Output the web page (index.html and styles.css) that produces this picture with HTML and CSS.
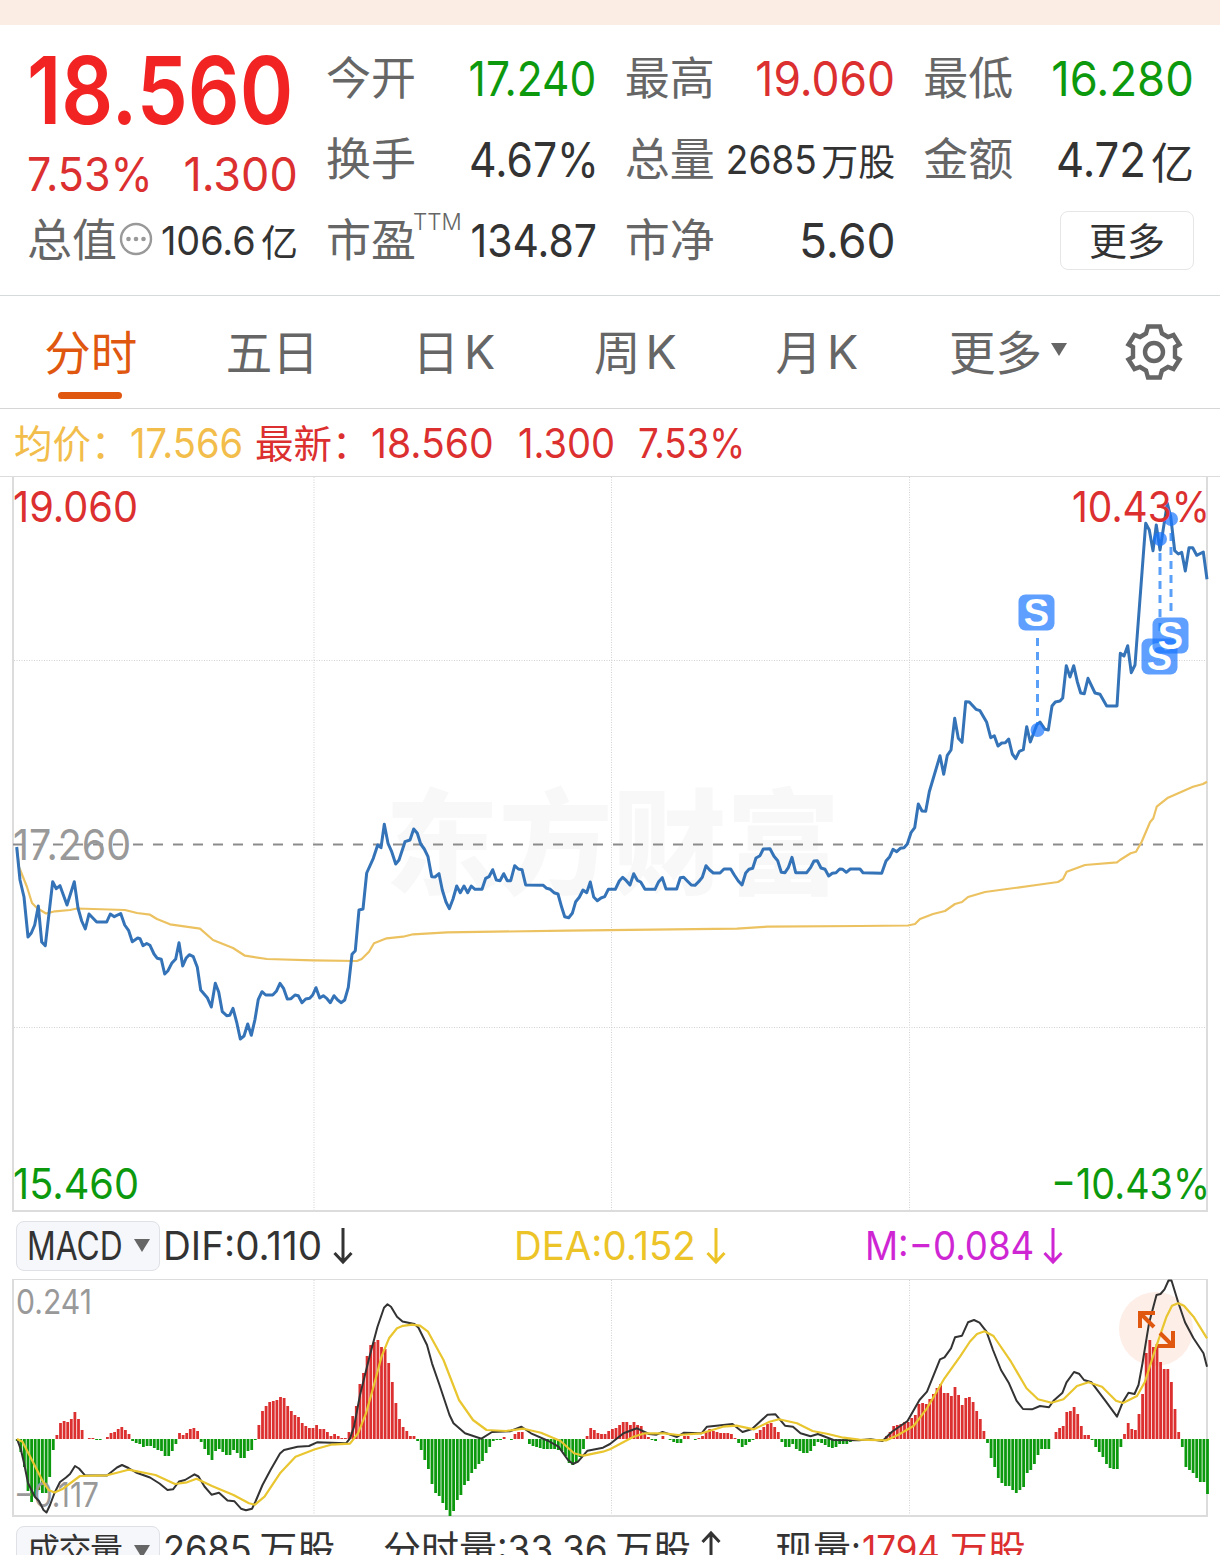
FILE: index.html
```html
<!DOCTYPE html>
<html lang="zh-CN">
<head>
    <meta charset="UTF-8">
    <meta name="viewport" content="width=device-width, initial-scale=1.0">
    <title>分时</title>
    <link rel="stylesheet" href="styles.css">
</head>
<body>
    <div class="top-strip"></div>
    <div class="quote">
        <div class="quote-col">
            <div class="price"><span class="num left s-price">18.560</span></div>
            <div class="change"><span class="num left s-pct">7.53%</span><span class="num s-chg">1.300</span></div>
            <div class="item last">
                <span class="label">总值</span>
                <svg class="dots" width="34" height="34" viewBox="0 0 34 34">
                    <circle cx="17" cy="17" r="15" fill="none" stroke="#999" stroke-width="2.4"/>
                    <circle cx="9.5" cy="17" r="2.3" fill="#999"/>
                    <circle cx="17" cy="17" r="2.3" fill="#999"/>
                    <circle cx="24.5" cy="17" r="2.3" fill="#999"/>
                </svg>
                <span class="value small"><span class="num s-cap">106.6</span><span class="unit">亿</span></span>
            </div>
        </div>
        <div class="quote-col">
            <div class="item"><span class="label">今开</span><span class="value green"><span class="num s-open">17.240</span></span></div>
            <div class="item"><span class="label">换手</span><span class="value"><span class="num s-turn">4.67%</span></span></div>
            <div class="item"><span class="label">市盈<span class="ttm">TTM</span></span><span class="value pe"><span class="num s-pe">134.87</span></span></div>
        </div>
        <div class="quote-col">
            <div class="item"><span class="label">最高</span><span class="value red"><span class="num s-high">19.060</span></span></div>
            <div class="item"><span class="label">总量</span><span class="value small"><span class="num s-vol">2685</span><span class="unit">万股</span></span></div>
            <div class="item"><span class="label">市净</span><span class="value"><span class="num s-pb">5.60</span></span></div>
        </div>
        <div class="quote-col">
            <div class="item"><span class="label">最低</span><span class="value green"><span class="num s-low">16.280</span></span></div>
            <div class="item"><span class="label">金额</span><span class="value"><span class="num s-amt">4.72</span><span class="unit">亿</span></span></div>
            <div class="item end"><button class="more-btn">更多</button></div>
        </div>
    </div>

    <div class="tabs">
        <a class="tab active">分时</a>
        <a class="tab">五日</a>
        <a class="tab">日<span class="k">K</span></a>
        <a class="tab">周<span class="k">K</span></a>
        <a class="tab">月<span class="k">K</span></a>
        <a class="tab wide">更多<span class="caret"></span></a>
        <svg class="gear" width="60" height="60" viewBox="-30 -30 60 60" fill="none" stroke="#666" stroke-width="4.4">
            <path d="M-6-25.500H6L8-18.500L14-15L19.500-17L25.500-7.500L21-5V5L25.500 7.500L19.500 17L14 15L8 18.500L6 25.500H-6L-8 18.500L-14 15L-19.500 17L-25.500 7.500L-21 5V-5L-25.500-7.500L-19.500-17L-14-15L-8-18.500Z"/>
            <circle cx="0" cy="0" r="9"/>
        </svg>
    </div>

    <div class="summary">
        <span class="cell avg-label gold">均价：</span>
        <span class="cell avg gold"><span class="num left s-avg">17.566</span></span>
        <span class="cell last-label red">最新：</span>
        <span class="cell now red"><span class="num left s-now">18.560</span></span>
        <span class="cell diff red"><span class="num left s-diff">1.300</span></span>
        <span class="cell red"><span class="num left s-rate">7.53%</span></span>
    </div>

    <svg class="chart" width="1220" height="736" viewBox="0 476 1220 736">
        <text class="watermark" x="385" y="885" textLength="455" lengthAdjust="spacingAndGlyphs">东方财富</text>
        <path class="frame" d="M0 476.5H1220"/>
        <path class="frame thick" d="M13 477V1211M1207 477V1211M12 1211H1208"/>
        <path class="grid" d="M314 477V1210M611.5 477V1210M909.5 477V1210M14 660.5H1206M14 1027.5H1206"/>
        <path class="base" d="M13 844.5H1206"/>
        <polyline class="avg-line" points="17,848 19,867 27,887 32,903 37,908 46,913.5 55,911.3 70,910 77,908.5 125,910 137,913 150,914.7 157,919 170,924.3 200,928.7 213,940 233,948 245,955.7 267,959 313,960.3 357,961 361.7,959 369,951.7 374,943.3 386.7,938.3 403,936.7 413,934.3 447,932.3 567,930.7 737,928.7 767,926.7 860,926 908,925.5 915,924 920,919 933,914 945,911 955,904 962,902 968,897 985,892 1040,884.5 1058,882 1063,879 1066.7,871.7 1085,865 1117,862.3 1120,860 1130.7,853.3 1136,851.7 1141.7,841.7 1150,822.3 1153.3,818.3 1156.7,806.7 1168,797.7 1193,786.7 1203,784 1207,781.7"/>
        <polyline class="price-line" points="16.7,847 20,880 24,897 28,937 31.3,933 34.7,925 38.3,906 41.7,942 45.3,945.7 52.7,881.7 56.3,888.7 60,885.7 67,905 74.3,881.7 78,908 81.7,921 85.3,929 89,914 96.7,922 106.7,922 110.3,914 114.3,916.7 120.7,913.5 124.7,925 128.7,930.7 132.3,941.7 137.7,938 140,938.7 143,945.7 146.7,943.5 150,945.3 154,954 157.3,958.3 161.3,959.3 164.7,974 168,970.7 171.7,963.3 175.7,959 179,942.7 182.7,966 186,958.3 189.3,954.7 193.3,956.7 197.3,967.3 200.7,990 207.3,997.7 211.3,1007 215.3,983.3 218.7,992 222.3,1011.7 226.7,1015.7 229.7,1015.3 233,1008.3 236.7,1022.3 240.3,1039 244,1036 247.7,1024 251.3,1035.3 255,1019.3 258.3,999.3 262,991.7 265.7,995 272.7,995 276.3,991.3 280,983.3 283.7,988.7 287.3,999 291,998.7 295,995 298.3,995.7 302,1002.7 305.7,999 309.7,998.3 312.7,995 316,987.7 319.7,998 323.3,995.7 327,998.7 330.3,1002.7 334,995.7 337.7,1000 341.3,1002.7 344.7,1000 348.3,987.3 352,954.3 355.3,950.7 359,910 363,909 366.7,873 373.3,858.3 377.7,845 381,847.7 384.3,824.3 388,843.3 391.7,851.7 395.7,864 399,860 405,841.7 410,840 413.7,829 417.3,833.3 420.7,844 424.3,849 428,856.7 431.7,876.7 435,877 439,873.7 442.3,890 446,902 449.3,908.7 453,899 456.7,886 460.3,892.7 464,886 467.7,892.7 471.3,886 475,889.3 482,889.3 485.7,878.3 489,876.7 492.7,869.7 496.3,880 500,880.7 503.7,873.7 507.3,880.7 510.7,880.7 514.7,865.7 518.3,869 522,869.7 525.7,885 543.3,885.3 546.7,888.3 550.3,889.3 554,892.7 558,894 561.7,907.3 564.7,916.7 568.7,917.7 572.3,913.3 575.7,901.7 579.3,897.3 583,890 586.7,892.7 590.3,882 593.7,897 597.3,900.7 601,898 604.7,896.7 608.3,889.3 615.3,889.3 619.3,881 622.7,877.3 626.3,880.7 630,885 633.7,873.7 637.3,880.3 640.7,882 645,889.3 655,889.3 658.7,881.7 662.3,877.7 666,889 676.7,889 680.3,877.7 683.7,877.3 687.3,881 691.3,885 695,885.3 698.7,881.7 702.3,877.3 706,865.7 709.7,870 713.3,873 720,873 724,869 730.7,869 734.3,875 738.3,881 742,885 745.7,873 749,869.3 752.7,868.3 756,858 760,855.7 763.3,849 770,848.7 774,856.3 777.7,860.7 781.3,872.3 785,872.7 788.3,867.7 792,857.3 795.7,872.7 806.7,872.7 810.7,867.3 814,861 817.3,860.7 821,868 825,869.3 828.7,876 832.3,873.3 836,872.7 839.7,869 842.7,869.3 846.3,872.3 850.3,869 860,869 863,872.7 881.7,873.3 886,861 889.7,856.7 893,849.3 896.7,851.7 900.3,848.3 904,847.7 907.3,844 911,832.7 914.7,827.7 918.3,804 922,811 925.7,811.3 929.3,791.7 940,755.7 943.7,774.3 947.3,755.3 951,750 954.7,718.3 958.3,738.3 962,742.3 965.7,701.7 969.3,702 976,709.3 980,710.7 986.7,722.3 990.7,737.7 994.3,735.7 998,746 1001.7,743 1005.3,742.7 1008.7,739 1012.3,754 1015.7,758.7 1019.3,751.3 1023.3,749.7 1026.7,726.7 1030.3,742 1036.7,725 1040,722 1045,729.3 1048.3,730 1052,706 1055.3,702 1060,701 1062.7,698 1066.3,665.7 1070,677 1073.7,665.7 1077.3,681.7 1080.7,693 1084.3,693.7 1088,678.3 1095,693 1100,694.3 1106.7,706 1117,706 1120.3,653.3 1124,656 1127.7,645.7 1131.3,672.7 1135,665 1145.7,523.3 1149.3,530 1153,550.7 1156.3,525 1160,550 1167.3,503.3 1170.7,516.7 1174.7,550.7 1178.3,554 1181.7,552.3 1185.3,571 1189,547.7 1192.7,547.7 1196.7,555.3 1203.3,552 1207,579.3"/>
        <g class="sell">
            <path d="M1037.5 638V724M1160 553V632M1171 533V612"/>
            <circle cx="1037.5" cy="730" r="7"/>
            <circle cx="1160" cy="539" r="7"/>
            <circle cx="1171" cy="519" r="7"/>
            <rect x="1018.5" y="594.5" width="36" height="36" rx="7"/>
            <text x="1036.5" y="626">S</text>
            <rect x="1141.5" y="638.5" width="36" height="36" rx="7"/>
            <text x="1159.5" y="670">S</text>
            <rect x="1152.5" y="617.5" width="36" height="36" rx="7"/>
            <text x="1170.5" y="649">S</text>
        </g>
        <g class="axis">
            <text class="up" x="13" y="522" textLength="125" lengthAdjust="spacingAndGlyphs">19.060</text>
            <text class="up" x="1072" y="522" textLength="138" lengthAdjust="spacingAndGlyphs">10.43%</text>
            <text class="flat" x="13" y="860" textLength="118" lengthAdjust="spacingAndGlyphs">17.260</text>
            <text class="down" x="13" y="1199" textLength="126" lengthAdjust="spacingAndGlyphs">15.460</text>
            <text class="down" x="1051" y="1199" textLength="159" lengthAdjust="spacingAndGlyphs">−10.43%</text>
        </g>
    </svg>

    <div class="panel-head">
        <button class="picker"><span class="num left s-macd">MACD</span><span class="caret"></span></button>
        <span class="stat dif"><span class="num left s-dif">DIF:0.110</span><svg class="arrow" viewBox="0 0 20 38"><path d="M10 1V35M1.500 26L10 35L18.500 26"/></svg></span>
        <span class="stat dea"><span class="num left s-dea">DEA:0.152</span><svg class="arrow" viewBox="0 0 20 38"><path d="M10 1V35M1.500 26L10 35L18.500 26"/></svg></span>
        <span class="stat m"><span class="num left s-m">M:−0.084</span><svg class="arrow" viewBox="0 0 20 38"><path d="M10 1V35M1.500 26L10 35L18.500 26"/></svg></span>
    </div>

    <svg class="chart" width="1220" height="238" viewBox="0 1279 1220 238">
        <path class="frame" d="M12 1279.5H1208"/>
        <path class="frame thick" d="M13 1279V1516M1207 1279V1516M12 1516H1208"/>
        <path class="grid" d="M314 1280V1515M611.5 1280V1515M909.5 1280V1515"/>
        <circle cx="1156" cy="1329" r="37" fill="#fdeee7"/>
        <g id="macd-bars"></g>
        <g class="axis small">
            <text class="flat" x="16" y="1314" textLength="76" lengthAdjust="spacingAndGlyphs">0.241</text>
            <text class="flat" x="14" y="1507" textLength="85" lengthAdjust="spacingAndGlyphs">−0.117</text>
        </g>
        <polyline class="dif-line" points="17,1439 21,1450 24,1463 28,1483 35,1497 39,1501 43.5,1510 46.5,1512.5 50,1505 54.5,1493 60,1482 66,1477.5 70,1474 75,1466 79,1468.5 85,1475.3 107,1475.5 117,1467.5 122,1465 128.5,1468 136,1472.5 150,1477.5 159.5,1483.5 167.5,1490 173,1489.3 179,1481.5 185,1480 194.5,1474.3 198.5,1476.5 204.5,1486.5 211.5,1494.7 219,1492.7 227.5,1500.5 234.5,1501.3 241,1508.7 246,1510.3 252,1508.7 255.5,1501.5 262.5,1485 270.5,1470 280,1453.5 284,1450 297.5,1446.7 309,1446 317,1442.3 346,1443.3 350,1438.3 354,1426.7 360,1395 369.5,1356.7 377.5,1326.7 384,1307.7 387.5,1304.3 391,1306.7 397,1316.7 402.5,1321.5 414.5,1324 418.5,1327.7 427,1345 432,1363.3 439.5,1385 449.5,1415 453.5,1423.3 465,1433.3 481.5,1438.7 492,1432 510,1431.3 521.5,1426.7 531,1433.3 548.5,1441 558.5,1446.7 568,1460 573,1464 578,1461.7 587.5,1450.7 603,1447.7 610,1444 623.5,1433.3 637,1428.3 649,1434 656.5,1434.7 662.5,1432 668.5,1434 677,1437 684,1432.7 701.5,1433.3 707,1426.7 732.5,1424 742.5,1432 752,1429 767.5,1414.7 775.5,1414.3 785,1425.7 793,1426.7 800.5,1433.3 810.5,1436.3 818,1434 833.5,1440 859,1440.3 870.5,1439.3 882.5,1441 892,1431.7 907.5,1421 919.5,1400 927,1391.7 940,1359.3 944.5,1357.3 951,1348.3 955,1337.3 962,1335.7 968,1322.3 974,1320 979.5,1322.7 986.5,1331.7 993,1350 1001,1370 1009,1383.3 1016.5,1400.7 1023,1409 1032,1409.3 1040,1406 1049,1407.3 1053.5,1400.7 1062.5,1392.7 1066.5,1382.3 1074,1372 1079,1373.7 1084,1380 1091.5,1382.3 1106,1401.7 1117,1416.7 1123,1401.7 1128.5,1392.7 1134.5,1394 1138.5,1385 1142.5,1363.3 1149,1323.3 1156.5,1295 1160.5,1294 1164.5,1289.3 1168.5,1280.5 1171.5,1280.5 1178,1301.7 1185,1322.3 1193.5,1338.3 1203.5,1353.3 1207,1366.7"/>
        <polyline class="dea-line" points="17,1439 22.5,1441.7 31,1458.3 43,1481.7 48.5,1490 54.5,1492.5 62,1489.3 80,1476 107,1475.3 117,1472.7 128.5,1469.7 155.5,1475 175,1484 187,1482.3 196.5,1478.7 212,1486 233.5,1495 249,1503.3 255,1504.7 264.5,1496.7 280,1473.3 295.5,1456.7 315,1449.3 331,1444.7 350,1443.7 358,1433.3 366,1413.3 373.5,1386.7 381.5,1356.7 389,1338.3 397,1328.3 403,1325.8 412,1324.7 420,1325.7 428,1331.7 443.5,1360 459,1400 473,1420 486.5,1430 506,1431 523.5,1428.7 541,1432.7 560.5,1441 574,1453.3 583.5,1455.7 603,1451.7 610,1449.3 633.5,1436.7 645,1433.3 664.5,1433.3 678,1435 701.5,1433.3 723,1426.7 736.5,1425.7 754,1429.3 769.5,1421.7 779,1419.3 797,1423.3 812.5,1431 828,1434 843.5,1437.7 859,1439.7 886.5,1440.3 898,1435 913.5,1426 927,1408.3 944.5,1378.3 960,1356.7 970,1341.500 977,1334 984.5,1331.3 993.5,1336 1011,1361.7 1026.5,1388.3 1038,1399.3 1051.5,1402.7 1063.5,1399.3 1077,1386 1088.5,1382.3 1102,1386.7 1116,1400.7 1123,1403 1137,1396 1145,1381.7 1155,1350 1166.5,1316.7 1172,1305.7 1178,1303.3 1184,1305.7 1193.5,1316.7 1207,1338.3"/>
        <path class="expand" d="M1155 1313H1140V1328M1140 1313L1154 1327M1158 1346H1173V1331M1173 1346L1160 1333"/>
    </svg>

    <div class="panel-head volume">
        <button class="picker"><span class="picker-text">成交量</span><span class="caret"></span></button>
        <span class="stat v1"><span class="num left s-v1">2685</span>万股</span>
        <span class="stat v2">分时量<span class="num left s-v2">:33.36</span>万股<svg class="arrow" viewBox="0 0 20 38"><path d="M10 37V3M1.500 12L10 3L18.500 12"/></svg></span>
        <span class="stat v3">现量<span class="num left">:</span></span>
        <span class="stat v4 red"><span class="num left s-v4">1794</span>万股</span>
    </div>

    <script src="script.js"></script>
</body>
</html>
```

FILE: styles.css
```css
body {
    margin: 0;
    width: 1220px;
    height: 1555px;
    overflow: hidden;
    background-color: #fff;
    color: #333;
    font-family: Inter, "Noto Sans CJK SC", sans-serif;
}
button {
    font-family: inherit;
    color: #333;
    padding: 0;
    box-sizing: border-box;
}
.red { color: #dc2f2f; }
.green { color: #0d990d; }
.gold { color: #f2bd4a; }

/* digits are set a little narrow */
.num {
    display: inline-block;
    white-space: nowrap;
    transform: scaleX(0.9);
    transform-origin: right center;
}
.num.left {
    transform-origin: left center;
}
.s-price { transform: scaleX(0.873); }
.s-pct { transform: scaleX(0.915); }
.s-chg { transform: scaleX(0.955); }
.s-cap { transform: scaleX(0.97); }
.s-open { transform: scaleX(0.885); }
.s-turn { transform: scaleX(0.89); margin-right: -2px; }
.s-pe { transform: scaleX(0.91); }
.s-high { transform: scaleX(0.925); }
.s-vol { transform: scaleX(0.95); }
.s-pb { transform: scaleX(0.96); }
.s-low { transform: scaleX(0.945); }
.s-amt { transform: scaleX(0.91); }
.s-avg { transform: scaleX(0.93); }
.s-now { transform: scaleX(0.955); }
.s-diff { transform: scaleX(0.93); }
.s-rate { transform: scaleX(0.895); }
.s-macd { transform: scaleX(0.815); width: 95px; }
.s-dif { transform: scaleX(0.99); }
.s-dea { transform: scaleX(0.985); }
.s-m { transform: scaleX(0.94); }
.s-v1 { transform: scaleX(0.95); margin-right: 3px; }
.s-v2 { transform: scaleX(0.97); margin-right: 4px; }
.s-v4 { transform: scaleX(0.92); margin-right: 3px; }

.top-strip {
    height: 25px;
    background-color: #fcede4;
}
.quote {
    display: flex;
    gap: 28px;
    height: 271px;
    padding: 13px 26px 0 27px;
    box-sizing: border-box;
    border-bottom: 1px solid #d6dada;
}
.quote-col {
    width: 271px;
}
.price {
    height: 106px;
    line-height: 105px;
    font-size: 93px;
    font-weight: 600;
    color: #f22323;
}
.change {
    display: flex;
    justify-content: space-between;
    height: 56px;
    line-height: 59px;
    font-size: 47px;
    color: #dc2f2f;
}
.item {
    display: flex;
    align-items: center;
    height: 81px;
    position: relative;
}
.item.end {
    justify-content: flex-end;
}
.label {
    font-size: 45px;
    line-height: 81px;
    color: #666;
    flex: none;
    width: 90px;
    white-space: nowrap;
}
.ttm {
    display: inline-block;
    margin-left: -3px;
    font-size: 22.500px;
    line-height: 24px;
    vertical-align: 27px;
    font-weight: 300;
}
.dots {
    flex: none;
    margin: -4px 0 0 2px;
}
.value {
    flex: 1;
    display: flex;
    justify-content: flex-end;
    align-items: center;
    min-width: 0;
    font-size: 48px;
    white-space: nowrap;
}
.value .unit {
    font-size: 43px;
    margin-left: 5px;
}
.value.small {
    font-size: 39px;
}
.value.small .unit {
    font-size: 37px;
}
.value.pe {
    font-size: 45px;
}
.more-btn {
    width: 134px;
    height: 59px;
    font-size: 38px;
    line-height: 50px;
    background-color: #fff;
    border: 1.5px solid #e6e6e6;
    border-radius: 8px;
}

.tabs {
    display: flex;
    align-items: center;
    height: 113px;
    box-sizing: border-box;
    border-bottom: 1px solid #d6d6d6;
}
.tab {
    position: relative;
    display: flex;
    justify-content: center;
    align-items: center;
    width: 181.500px;
    height: 112px;
    padding-bottom: 5px;
    box-sizing: border-box;
    font-size: 46.500px;
    color: #666;
}
.tab .k {
    margin: 4px 0 0 5px;
}
.tab.wide {
    width: 201px;
}
.tab.active {
    color: #e0570f;
}
.tab.active::after {
    content: "";
    position: absolute;
    left: 58px;
    bottom: 9px;
    width: 64px;
    height: 7px;
    border-radius: 4px;
    background-color: #e0570f;
}
.caret {
    border: 8px solid transparent;
    border-top: 13px solid #666;
    border-bottom: 0;
    margin-left: 9px;
}
.gear {
    margin-left: 15px;
}

.summary {
    display: flex;
    align-items: center;
    height: 67px;
    padding-left: 14px;
    font-size: 41px;
    white-space: nowrap;
}
.cell.avg-label, .cell.last-label {
    width: 116px;
    padding-bottom: 3px;
    font-size: 38.500px;
}
.cell.avg { width: 125px; }
.cell.now { width: 147px; }
.cell.diff { width: 120px; }

.chart {
    display: block;
}
.frame {
    fill: none;
    stroke: #dcdcdc;
    stroke-width: 1;
}
.frame.thick {
    stroke-width: 2;
}
.grid {
    fill: none;
    stroke: #d2d2d2;
    stroke-width: 1;
    stroke-dasharray: 1 1.500;
}
.base {
    stroke: #8c8c8c;
    stroke-width: 2;
    stroke-dasharray: 10 10;
}
.watermark {
    font-family: "Noto Sans CJK SC", sans-serif;
    font-size: 114px;
    font-weight: 900;
    fill: #f8f8f8;
}
.price-line, .avg-line, .dif-line, .dea-line {
    fill: none;
    stroke-linejoin: round;
}
.price-line {
    stroke: #3473b7;
    stroke-width: 3;
}
.avg-line {
    stroke: #ecc261;
    stroke-width: 2.200;
}
.dif-line {
    stroke: #333;
    stroke-width: 2;
}
.dea-line {
    stroke: #e9c62f;
    stroke-width: 2.200;
}
.sell path {
    fill: none;
    stroke: #1677f5;
    stroke-opacity: 0.7;
    stroke-width: 3;
    stroke-dasharray: 8 6;
}
.sell circle, .sell rect {
    fill: #1a76ff;
    fill-opacity: 0.7;
}
.sell text {
    font-family: "Liberation Sans", sans-serif;
    font-size: 38px;
    font-weight: bold;
    fill: #fff;
    text-anchor: middle;
}
.axis text {
    font-size: 43px;
}
.axis.small text {
    font-size: 34px;
}
.axis .up { fill: #dc2f2f; }
.axis .down { fill: #0d990d; }
.axis .flat { fill: #999; }
.expand {
    fill: none;
    stroke: #e0570f;
    stroke-width: 4;
}

.panel-head {
    display: flex;
    align-items: center;
    height: 67px;
    padding-left: 16px;
    font-size: 39px;
    white-space: nowrap;
}
.panel-head.volume {
    align-items: flex-start;
    height: 38px;
    padding-top: 9px;
    line-height: 46px;
}
.picker {
    display: flex;
    align-items: center;
    justify-content: space-between;
    flex: none;
    width: 144px;
    height: 50px;
    padding: 0 9px 0 10px;
    font-size: 39px;
    background-color: #f6f7fa;
    border: 1px solid #dfe1e6;
    border-radius: 8px;
}
.picker .caret {
    margin-left: 0;
}
.picker-text {
    padding-bottom: 7px;
    font-size: 33px;
    letter-spacing: -1.500px;
}
.stat {
    display: flex;
    align-items: center;
    flex: none;
}
.arrow {
    width: 20px;
    height: 38px;
    fill: none;
    stroke: currentColor;
    stroke-width: 3;
}
.stat.dif { width: 351px; margin-left: 3px; }
.stat.dif .arrow { margin-left: 9px; }
.stat.dea { width: 351px; color: #ecc428; }
.stat.dea .arrow { margin-left: 7px; }
.stat.m { color: #cf26d4; }
.stat.m .arrow { margin-left: -2px; }
.stat.v1 { width: 220px; margin-left: 3px; font-size: 38px; }
.stat.v2 { width: 392px; font-size: 38px; }
.stat.v2 .arrow { margin-left: 10px; }
.stat.v3 { width: 87px; font-size: 38px; }
.stat.v4 { font-size: 38px; }
```

FILE: script.js
```js
// MACD histogram, one value per minute
const macd = [
    -2, -13, -28, -52, -63, -58, -51, -54, -54, -38, -11, 4, 16, 18, 17, 20, 27, 20, 9, 0,
    1, 1, -1, -1, 0, 2, 6, 7, 10, 12, 9, 5, -2, -4, -5, -8, -7, -7, -9, -11,
    -12, -17, -17, -12, -5, 6, 4, 6, 10, 11, 8, -3, -10, -16, -21, -12, -10, -13, -16, -16,
    -11, -14, -19, -19, -12, -11, -1, 14, 28, 33, 37, 38, 39, 42, 41, 33, 28, 24, 22, 16,
    13, 11, 11, 14, 10, 10, 7, 3, 5, 3, 1, 1, 7, 23, 33, 55, 66, 83, 94, 97,
    99, 92, 90, 76, 57, 36, 20, 12, 8, 3, 3, -2, -11, -21, -30, -45, -54, -57, -64, -71,
    -77, -72, -61, -56, -46, -42, -34, -30, -25, -22, -14, -8, -2, -1, -1, 2, 0, -1, 5, 7,
    7, 0, -5, -7, -8, -9, -10, -10, -10, -10, -11, -12, -17, -24, -26, -24, -18, -10, 3, 11,
    9, 6, 5, 5, 8, 10, 11, 14, 17, 17, 14, 17, 14, 13, 7, 2, -1, -2, 0, 3,
    0, -1, -3, -4, -4, 3, 3, 0, -1, 1, 3, 7, 10, 8, 7, 6, 6, 6, 5, 1,
    -4, -8, -6, -3, -1, 6, 9, 12, 15, 16, 12, 7, -3, -8, -8, -5, -10, -12, -14, -14,
    -12, -7, -3, -4, -6, -8, -9, -8, -5, -5, -5, -3, -2, -1, -1, -1, -1, -1, -1, -1,
    -1, 3, 7, 13, 14, 15, 17, 17, 21, 24, 35, 36, 35, 40, 45, 51, 55, 46, 46, 43,
    52, 44, 34, 41, 42, 37, 28, 20, 8, -4, -19, -28, -39, -44, -47, -47, -51, -54, -51, -48,
    -34, -31, -25, -16, -10, -10, -10, 0, 7, 11, 13, 27, 28, 32, 25, 13, 4, 4, -1, -8,
    -13, -18, -25, -29, -30, -30, -8, 5, 16, 10, 9, 25, 45, 86, 99, 92, 95, 77, 70, 70,
    57, 30, 7, -8, -28, -31, -34, -39, -43, -43, -55
];
const zero = 1439;
const step = 3.607;
const bars = document.getElementById('macd-bars');

macd.forEach((v, i) => {
    if (v === 0) return;
    const bar = document.createElementNS('http://www.w3.org/2000/svg', 'rect');
    bar.setAttribute('x', (15.8 + i * step).toFixed(1));
    bar.setAttribute('y', v > 0 ? zero - v : zero);
    bar.setAttribute('width', 2.8);
    bar.setAttribute('height', Math.abs(v));
    bar.setAttribute('fill', v > 0 ? '#dc2f2f' : '#0d990d');
    bars.appendChild(bar);
});
```
